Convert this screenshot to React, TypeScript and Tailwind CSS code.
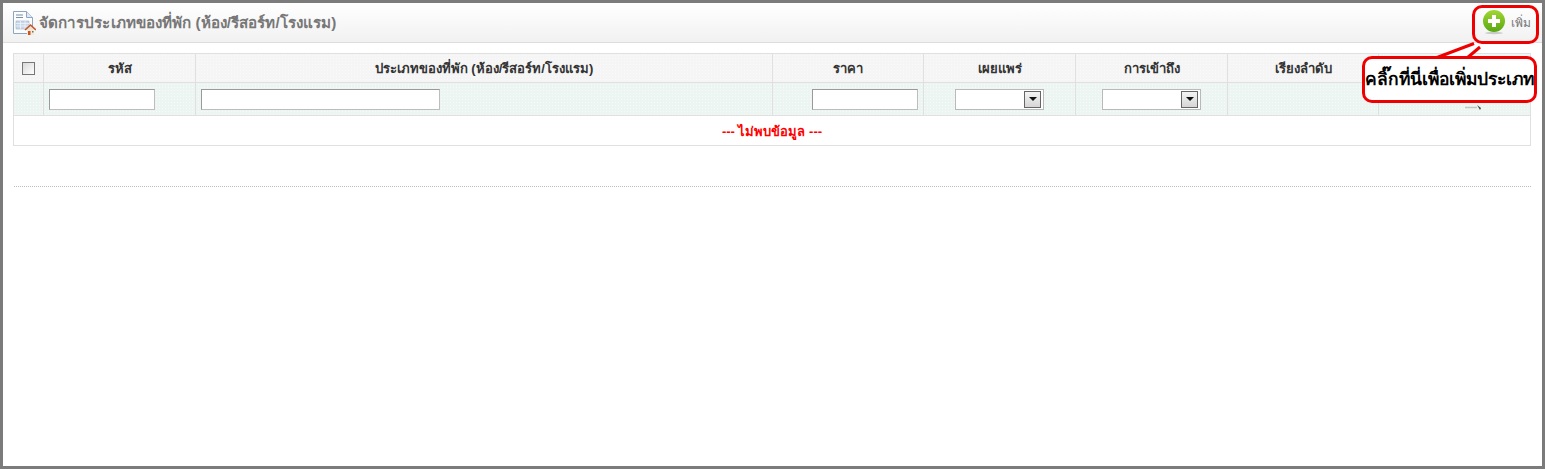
const FONT = "font-['Tahoma','Liberation_Sans','Noto_Sans',sans-serif]";

const DOTS = 'bg-[radial-gradient(#ffffff80_0.5px,transparent_0.6px)] bg-[length:3px_3px]';

const PageIcon = () => (
  <svg width="24" height="26" viewBox="0 0 24 26" className="shrink-0">
    <path d="M1.5 1.5h13l6 6v16h-19z" fill="#fafcfe" stroke="#8ea6c0" />
    <path d="M14.5 1.5v6h6" fill="#dfe8f2" stroke="#8ea6c0" />
    <path d="M4 5h7M4 7.5h7" stroke="#7d8fa6" strokeWidth="1" />
    <path d="M4 11h13v8H4z" fill="#c9d8e8" stroke="#9db3c9" strokeWidth="0.6" />
    <path d="M4 13.5h13M4 16h13M8.5 11v8M13 11v8" stroke="#f3f7fb" strokeWidth="0.7" />
    <path d="M13 20l5.5-5 5.5 5" fill="#e9e2d5" stroke="#c2552d" strokeWidth="1.6" />
    <path d="M15 19.5h7V25h-7z" fill="#f1ead9" />
    <path d="M16 21h2.5v4H16z" fill="#d0521c" />
    <path d="M20 21h1.5v1.5H20z" fill="#7d6a55" />
  </svg>
);

const PlusIcon = () => (
  <svg width="24" height="25" viewBox="0 0 24 25" className="shrink-0">
    <defs>
      <linearGradient id="plus" x1="0" y1="0" x2="0" y2="1">
        <stop offset="0" stopColor="#a2d733" />
        <stop offset="1" stopColor="#58a612" />
      </linearGradient>
    </defs>
    <ellipse cx="12" cy="23" rx="9" ry="1.2" fill="#c9c9c9" />
    <circle cx="12" cy="11" r="11" fill="url(#plus)" />
    <path d="M10 5h4v4h4v4h-4v4h-4v-4H6V9h4z" fill="#ffffff" />
  </svg>
);

const Arrow = () => (
  <div className="flex h-[17px] w-[17px] items-center justify-center border border-[#666666] bg-[linear-gradient(#f4f4f4,#d6d6d6)]">
    <svg width="8" height="4" viewBox="0 0 8 4">
      <path d="M0 0h8L4 4z" fill="#111111" />
    </svg>
  </div>
);

const Select = ({ width }: { width: string }) => (
  <div className={`flex h-[21px] items-center justify-end border border-[#b9b9b9] bg-white pr-[2px] ${width}`}>
    <Arrow />
  </div>
);

const TextBox = ({ width }: { width: string }) => (
  <input
    readOnly
    className={`block h-[21px] border border-t-[#9a9a9a] border-l-[#9a9a9a] border-r-[#bdbdbd] border-b-[#bdbdbd] bg-white ${width}`}
  />
);

const headers = ['รหัส', 'ประเภทของที่พัก (ห้อง/รีสอร์ท/โรงแรม)', 'ราคา', 'เผยแพร่', 'การเข้าถึง', 'เรียงลำดับ', ''];
const colWidths = ['w-[30px]', 'w-[152px]', 'w-[577px]', 'w-[151px]', 'w-[152px]', 'w-[152px]', 'w-[151px]', 'w-[152px]'];

function App() {
  return (
    <div className={`relative h-[469px] w-[1545px] overflow-hidden border-[3px] border-[#7b7b7b] bg-white ${FONT}`}>
      <div className="flex h-[40px] items-center justify-between border-b border-[#dddddd] bg-[linear-gradient(#ffffff,#f1f1f1)] pl-[9px] pr-[10px]">
        <div className="flex items-center gap-[3px]">
          <PageIcon />
          <h1 className="pt-[2px] text-[15.2px] font-bold tracking-[0.07px] text-[#777777]">จัดการประเภทของที่พัก (ห้อง/รีสอร์ท/โรงแรม)</h1>
        </div>
        <div className="flex items-center gap-[5px] pr-[1px]">
          <PlusIcon />
          <span className="text-[12px] text-[#777777]">เพิ่ม</span>
        </div>
      </div>

      <div className="px-[10px] pt-[10px]">
        <table className="w-[1517px] table-fixed border-collapse text-[13px]">
          <colgroup>
            {colWidths.map((w, i) => (
              <col key={i} className={w} />
            ))}
          </colgroup>
          <thead>
            <tr className={`h-[29px] bg-[#f5f5f5] ${DOTS}`}>
              <th className="border border-[#e0e0e0]">
                <div className="mx-auto h-[13px] w-[13px] border border-[#777777] bg-[linear-gradient(135deg,#d8d8d8,#ffffff)]" />
              </th>
              {headers.map((h, i) => (
                <th key={i} className="border border-[#e0e0e0] pt-[2px] text-[13.1px] font-bold text-[#333333]">
                  {h}
                </th>
              ))}
            </tr>
          </thead>
          <tbody>
            <tr className={`h-[33px] bg-[#edf5f3] ${DOTS}`}>
              <td className="border border-[#e0e0e0]" />
              <td className="border border-[#e0e0e0] pl-[5px]">
                <TextBox width="w-[106px]" />
              </td>
              <td className="border border-[#e0e0e0] pl-[5px]">
                <TextBox width="w-[239px]" />
              </td>
              <td className="border border-[#e0e0e0] pl-[39px]">
                <TextBox width="w-[106px]" />
              </td>
              <td className="border border-[#e0e0e0] pl-[31px]">
                <Select width="w-[89px]" />
              </td>
              <td className="border border-[#e0e0e0] pl-[26px]">
                <Select width="w-[99px]" />
              </td>
              <td className="border border-[#e0e0e0]" />
              <td className="border border-[#e0e0e0]" />
            </tr>
            <tr className="h-[30px]">
              <td colSpan={8} className="border border-[#e0e0e0] pt-[2px] text-center font-bold text-[#ff0000]">
                --- ไม่พบข้อมูล ---
              </td>
            </tr>
          </tbody>
        </table>
        <div className="mt-[40px] ml-[1px] w-[1517px] border-t border-dotted border-[#bbbbbb]" />
      </div>

      {/* red annotation drawn over the page */}
      <div className="absolute left-[1469px] top-[2px] h-[39px] w-[67px] rounded-[10px] border-[3px] border-[#ee0000]" />
      <svg className="absolute left-[1430px] top-[36px]" width="50" height="22" viewBox="0 0 50 22">
        <path d="M4 19L42 5l6 3L34 20z" fill="#ffffff" />
        <path d="M4 18.500L41 4.500M47 8L34 19" stroke="#ee0000" strokeWidth="3" fill="none" />
      </svg>
      <div className="absolute left-[1359px] top-[53px] flex h-[47px] w-[175px] items-center justify-center rounded-[10px] border-[3px] border-[#ee0000] bg-white">
        <span className="whitespace-nowrap text-[17.4px] font-bold text-black">คลิ๊กที่นี่เพื่อเพิ่มประเภท</span>
      </div>
      <svg className="absolute left-[1460px] top-[100px]" width="20" height="8" viewBox="0 0 20 8">
        <path d="M2 4.500h12" stroke="#c4c4c4" strokeWidth="1.500" />
        <path d="M14 2l4 3-1 2z" fill="#444444" />
      </svg>
    </div>
  );
}

export default App;
